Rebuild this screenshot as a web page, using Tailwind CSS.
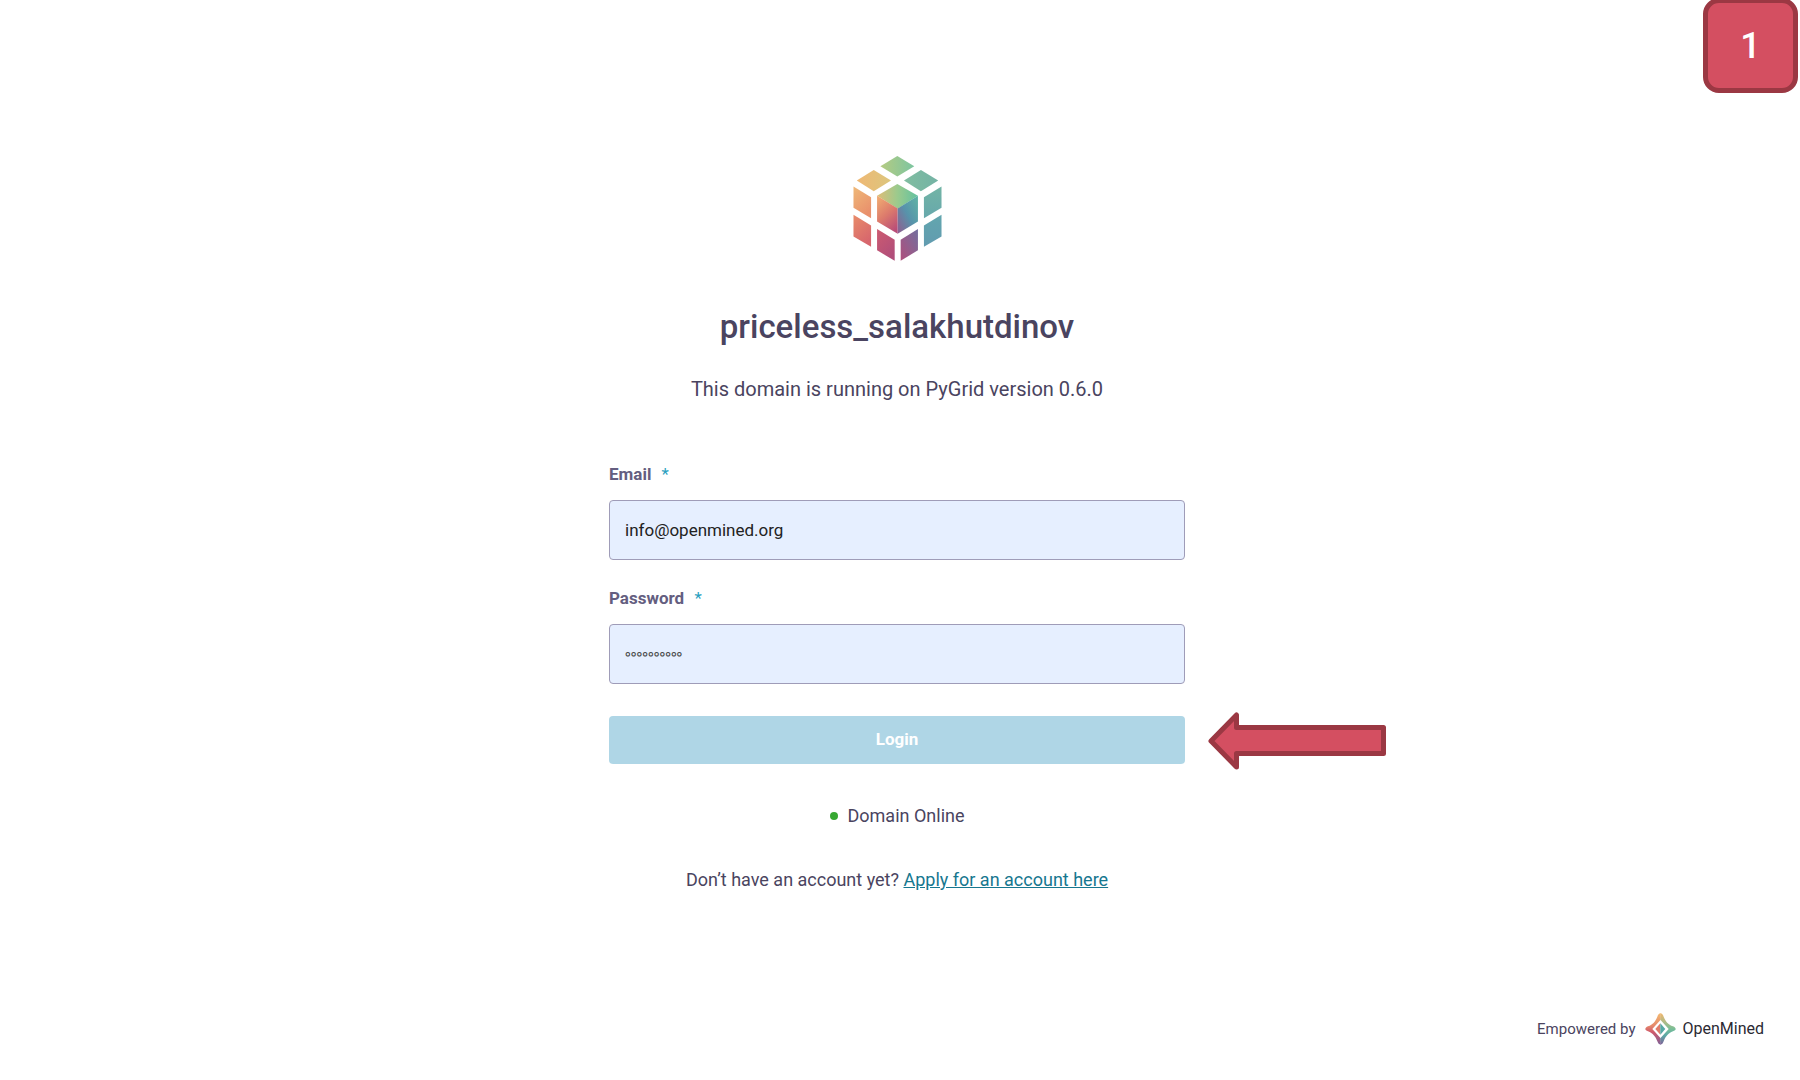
<!DOCTYPE html>
<html lang="en">
<head>
<meta charset="utf-8">
<meta name="viewport" content="width=device-width, initial-scale=1">
<title>PyGrid – Login</title>
<script src="https://cdn.jsdelivr.net/npm/@tailwindcss/browser@4"></script>
</head>
<body class="relative flex min-h-screen flex-col bg-white font-[Roboto,sans-serif] text-[#4a4460]">
  <div class="absolute -top-0.5 right-0.5 flex size-[95px] items-center justify-center rounded-2xl border-5 border-[#9b3843] bg-[#d44f61] text-4xl font-medium text-white">1</div>

  <main class="flex flex-1 flex-col items-center pt-39 pr-1.5">
    <svg class="h-[105px] w-[89px]" viewBox="39 33 267 316" role="img" aria-label="PyGrid">
      <defs>
        <linearGradient id="top" x1="0" x2="1"><stop stop-color="#b5cb82"/><stop offset="1" stop-color="#7cc5a0"/></linearGradient>
        <linearGradient id="tl" x1="0" x2="1"><stop stop-color="#efb874"/><stop offset="1" stop-color="#dcc67d"/></linearGradient>
        <linearGradient id="tr" x1="0" x2="1"><stop stop-color="#80bda0"/><stop offset="1" stop-color="#74b3a5"/></linearGradient>
        <linearGradient id="l1" x1="0" y1="0" x2=".5" y2="1"><stop stop-color="#efb978"/><stop offset="1" stop-color="#e9906c"/></linearGradient>
        <linearGradient id="l2" x1="0" y1="0" x2=".5" y2="1"><stop stop-color="#e98c69"/><stop offset="1" stop-color="#d7666d"/></linearGradient>
        <linearGradient id="r1" x1="0" y1="0" x2="0" y2="1"><stop stop-color="#72b4a5"/><stop offset="1" stop-color="#67a8ac"/></linearGradient>
        <linearGradient id="r2" x1="0" y1="0" x2="0" y2="1"><stop stop-color="#62a6ae"/><stop offset="1" stop-color="#629bb0"/></linearGradient>
        <linearGradient id="b1" x1="0" y1="0" x2=".6" y2="1"><stop stop-color="#cd5b70"/><stop offset="1" stop-color="#b14e7a"/></linearGradient>
        <linearGradient id="b2" x1="0" y1="1" x2="1" y2="0"><stop stop-color="#b04f7c"/><stop offset="1" stop-color="#726f9f"/></linearGradient>
        <linearGradient id="ct" x1="0" x2="1"><stop stop-color="#dfbd77"/><stop offset=".5" stop-color="#9bca8d"/><stop offset="1" stop-color="#62c2a0"/></linearGradient>
        <linearGradient id="cl" x1=".2" y1="0" x2=".7" y2="1"><stop stop-color="#efa871"/><stop offset=".5" stop-color="#dc7a6c"/><stop offset="1" stop-color="#b94d78"/></linearGradient>
        <linearGradient id="cr" x1="1" y1="0" x2="0" y2="1"><stop stop-color="#5fb5a5"/><stop offset=".5" stop-color="#5793ab"/><stop offset="1" stop-color="#925b8e"/></linearGradient>
      </defs>
      <path fill="url(#top)" d="M172 33l51 31-51 31-51-31z"/>
      <path fill="url(#tl)" d="M101 75l52 32-52 32-51-32z"/>
      <path fill="url(#tr)" d="M243 75l52 32-52 32-51-32z"/>
      <path fill="url(#l1)" d="M40 125l53 32v63l-53-31z"/>
      <path fill="url(#l2)" d="M40 210l53 32v64l-53-31z"/>
      <path fill="url(#r1)" d="M305 125l-53 32v63l53-31z"/>
      <path fill="url(#r2)" d="M305 210l-53 32v64l53-31z"/>
      <path fill="url(#b1)" d="M111 253l53 32v63l-53-31z"/>
      <path fill="url(#b2)" d="M234 253l-52 32v63l52-31z"/>
      <path fill="url(#ct)" d="M172 117l62 36-61 39-62-39z"/>
      <path fill="url(#cl)" d="M111 153l62 38v76l-62-37z"/>
      <path fill="url(#cr)" d="M234 153l-61 38v76l61-37z"/>
    </svg>

    <h1 class="mt-11 text-[33px] leading-11 font-medium">priceless_salakhutdinov</h1>
    <p class="mt-6 text-xl leading-8">This domain is running on PyGrid version 0.6.0</p>

    <form class="mt-[55px] flex w-full max-w-[576px] flex-col">
      <label for="email" class="text-[17px] leading-7 font-bold text-[#645e80]">Email <span class="ml-1.5 font-normal text-[#2a9fc0]">*</span></label>
      <input id="email" type="email" value="info@openmined.org" class="mt-3 h-15 rounded border border-[#9f9cb8] bg-[#e6efff] px-[15px] text-[17px] text-[#222]">
      <label for="password" class="mt-6 text-[17px] leading-7 font-bold text-[#645e80]">Password <span class="ml-1.5 font-normal text-[#2a9fc0]">*</span></label>
      <input id="password" type="password" value="changethis" class="mt-3 h-15 rounded border border-[#9f9cb8] bg-[#e6efff] px-[15px] text-[17px] text-[#e6efff] [-webkit-text-stroke:1px_#444]">
      <div class="relative mt-8">
        <button type="submit" class="block h-12 w-full rounded bg-[#afd6e6] text-[17px] font-bold text-white">Login</button>
        <svg class="absolute top-0 left-full ml-[23px] -mt-1 h-[58px] w-[178px]" viewBox="0 0 178 58" aria-hidden="true">
          <path d="M3 29L28.500 3V15.500H175.500V41.500H28.500V55z" fill="#d44f61" stroke="#9b3843" stroke-width="5" stroke-linejoin="round"/>
        </svg>
      </div>
    </form>

    <p class="mt-9 flex items-center gap-2.5 text-lg leading-8"><span class="size-2 rounded-full bg-[#37a832]"></span>Domain Online</p>
    <p class="mt-8 text-lg leading-8">Don’t have an account yet? <a href="#apply" class="text-[#16778f] underline">Apply for an account here</a></p>
  </main>

  <footer class="flex items-center justify-end pr-9 pb-[35px] text-[15px]">
    <span>Empowered by</span>
    <svg class="ml-2.5 h-8 w-[31px]" viewBox="0 0 93 96" aria-hidden="true">
      <defs>
        <linearGradient id="oa" x1="0" y1="0" x2="0" y2="1"><stop stop-color="#f3b971"/><stop offset=".4" stop-color="#e5886b"/><stop offset=".6" stop-color="#cf586b"/><stop offset="1" stop-color="#7e6297"/></linearGradient>
        <linearGradient id="ob" x1="0" y1="0" x2="0" y2="1"><stop stop-color="#f1b76f"/><stop offset=".5" stop-color="#79bf98"/><stop offset=".7" stop-color="#5ba9a5"/><stop offset="1" stop-color="#7e6297"/></linearGradient>
      </defs>
      <path fill="url(#oa)" d="M47 1c-5 0-8 5-10 10C31 26 24 34 9 40 4 42 1 45 1 48s3 5 8 7c15 6 22 15 28 30 2 6 5 10 10 10V76L22 48l25-28z"/>
      <path fill="url(#ob)" d="M46 1c5 0 8 5 10 10 6 15 13 23 28 29 5 2 8 5 8 8s-3 5-8 7c-15 6-22 15-28 30-2 6-5 10-10 10V76l25-28-25-28z"/>
      <path fill="#df7b69" d="M46 31v34L31 48z"/>
      <path fill="#55a9a5" d="M46 31v34l15-17z"/>
    </svg>
    <span class="ml-1.5 text-base text-[#2b2a33]">OpenMined</span>
  </footer>
</body>
</html>
